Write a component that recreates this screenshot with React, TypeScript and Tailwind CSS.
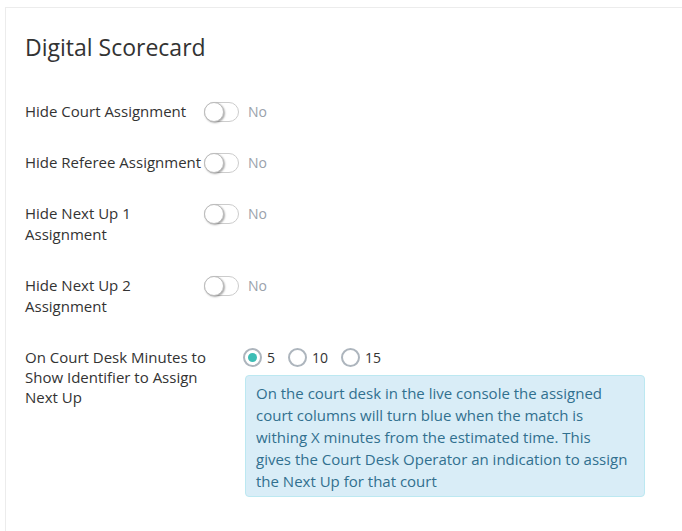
import { useState } from "react";

function Toggle({ on, onChange }: { on: boolean; onChange: () => void }) {
  return (
    <button
      type="button"
      onClick={onChange}
      className={`relative h-[20px] w-[35px] shrink-0 rounded-full border ${
        on ? "border-[#3dbdb5] bg-[#3dbdb5]" : "border-[#ccc] bg-white"
      }`}
    >
      <span
        className={`absolute top-[-1px] h-[20px] w-[20px] rounded-full border border-[#bbb] bg-white shadow-[1px_1px_2px_rgba(0,0,0,0.35)] ${
          on ? "left-[14px]" : "left-[-1px]"
        }`}
      />
    </button>
  );
}

function ToggleRow({ label }: { label: React.ReactNode }) {
  const [on, setOn] = useState(false);
  return (
    <div className="flex items-start">
      <div className="w-[179px] shrink-0">{label}</div>
      <div className="flex h-[21px] items-center">
        <Toggle on={on} onChange={() => setOn(!on)} />
        <span className="ml-[9px] text-[14px] text-[#9aa2ab]">{on ? "Yes" : "No"}</span>
      </div>
    </div>
  );
}

export default function App() {
  const [minutes, setMinutes] = useState(5);

  return (
    <div
      className="h-[531px] overflow-hidden bg-white pl-[5px] pt-[7px] text-[#333]"
      style={{ fontFamily: '"Open Sans", "Noto Sans", sans-serif' }}
    >
      <div className="h-[600px] w-[720px] border-l border-t border-[#ececec] pl-[19px] pt-[25px]">
        <h2 className="text-[23px] leading-[28px] text-[#333]">Digital Scorecard</h2>

        <div className="mt-[40px] flex flex-col gap-[30px] text-[15px] leading-[21px]">
          <ToggleRow label="Hide Court Assignment" />
          <ToggleRow label="Hide Referee Assignment" />
          <ToggleRow
            label={
              <>
                Hide Next Up 1
                <br />
                Assignment
              </>
            }
          />
          <ToggleRow
            label={
              <>
                Hide Next Up 2
                <br />
                Assignment
              </>
            }
          />

          <div className="flex items-start">
            <div className="w-[218px] shrink-0 leading-[20px]">
              On Court Desk Minutes to
              <br />
              Show Identifier to Assign
              <br />
              Next Up
            </div>
            <div>
              <div className="flex h-[21px] items-center">
                {[5, 10, 15].map((m) => (
                  <label key={m} className="mr-[13px] flex cursor-pointer items-center">
                    <span className="flex h-[19px] w-[19px] items-center justify-center rounded-full border-2 border-[#adb5bd] bg-white">
                      {minutes === m && <span className="h-[9px] w-[9px] rounded-full bg-[#3dbdb5]" />}
                    </span>
                    <input
                      type="radio"
                      className="hidden"
                      checked={minutes === m}
                      onChange={() => setMinutes(m)}
                    />
                    <span className="ml-[5px] text-[14px]">{m}</span>
                  </label>
                ))}
              </div>
              <div className="ml-[2px] mt-[7px] w-[400px] rounded-[4px] border border-[#bce8f1] bg-[#d9edf7] px-[10px] pb-[4px] pt-[6px] text-[15px] leading-[22px] text-[#31708f]">
                On the court desk in the live console the assigned
                <br />
                court columns will turn blue when the match is
                <br />
                withing X minutes from the estimated time. This
                <br />
                gives the Court Desk Operator an indication to assign
                <br />
                the Next Up for that court
              </div>
            </div>
          </div>
        </div>
      </div>
    </div>
  );
}
